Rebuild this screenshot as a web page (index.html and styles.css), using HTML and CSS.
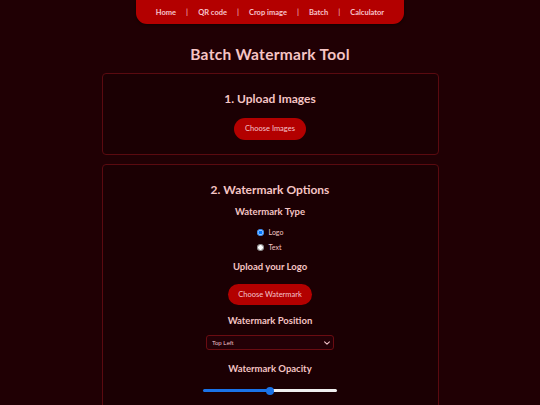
FILE: index.html
```html
<!DOCTYPE html>
<html lang="en">
<head>
<meta charset="utf-8">
<title>Batch Watermark Tool</title>
<link rel="stylesheet" href="styles.css">
</head>
<body>
<nav class="topnav">
  <a class="navlink" href="#">Home</a><span class="sep">|</span>
  <a class="navlink" href="#">QR code</a><span class="sep">|</span>
  <a class="navlink" href="#">Crop image</a><span class="sep">|</span>
  <a class="navlink" href="#">Batch</a><span class="sep">|</span>
  <a class="navlink" href="#">Calculator</a>
</nav>
<h1 class="title">Batch Watermark Tool</h1>
<main class="wrap">
  <section class="card card-upload">
    <h2 class="card-title">1. Upload Images</h2>
    <button class="btn">Choose Images</button>
  </section>
  <section class="card card-options">
    <h2 class="card-title">2. Watermark Options</h2>
    <h3 class="label">Watermark Type</h3>
    <div class="radios">
      <label class="radio"><input type="radio" name="t" checked> Logo</label>
      <label class="radio"><input type="radio" name="t"> Text</label>
    </div>
    <h3 class="label">Upload your Logo</h3>
    <button class="btn btn-wm">Choose Watermark</button>
    <h3 class="label label-pos">Watermark Position</h3>
    <div class="select-wrap">
      <select class="select"><option>Top Left</option></select>
      <svg class="chev" viewBox="0 0 10 6" width="6" height="4"><path d="M1 1 L5 5 L9 1" fill="none" stroke="#f5c4cc" stroke-width="1.8" stroke-linecap="round" stroke-linejoin="round"/></svg>
    </div>
    <h3 class="label label-op">Watermark Opacity</h3>
    <input class="range" type="range" min="0" max="100" value="50">
  </section>
</main>
</body>
</html>
```
FILE: styles.css
```css
html, body {
  margin: 0;
  padding: 0;
  background: #200004;
  font-family: "Lato", "Noto Sans", sans-serif;
  color: #f5c4c4;
}
.topnav {
  width: 268px;
  height: 24px;
  margin: 0 auto;
  background: #b30000;
  border-radius: 0 0 11px 11px;
  display: flex;
  align-items: center;
  justify-content: center;
  gap: 10px;
  box-shadow: 0 1px 3px rgba(0,0,0,0.5);
}
.navlink {
  color: #f7c4cc;
  text-decoration: none;
  font-size: 7.5px;
  font-weight: 700;
}
.sep {
  color: #f7c4cc;
  font-size: 8px;
}
.title {
  text-align: center;
  font-size: 15.5px;
  font-weight: 700;
  margin: 21px 0 10px;
  letter-spacing: 0.3px;
}
.wrap {
  width: 337px;
  margin: 0 auto;
  display: flex;
  flex-direction: column;
  gap: 9px;
}
.card {
  border: 1px solid #5a0a10;
  border-radius: 4px;
  background: #1b0003;
  display: flex;
  flex-direction: column;
  align-items: center;
  padding: 17px 0 15px;
}
.card-upload {
  padding-bottom: 14px;
}
.card-title {
  margin: 0;
  font-size: 12px;
  line-height: 15px;
  font-weight: 700;
}
.card-upload .btn {
  margin-top: 11.5px;
}
.btn {
  background: #b30000;
  color: #f5c4cc;
  border: none;
  border-radius: 12px;
  font-family: inherit;
  font-size: 7.5px;
  height: 22px;
  padding: 0 11px;
}
.btn-wm {
  height: 21px;
  padding: 0 10px;
  margin-top: 11px;
}
.label {
  margin: 9.5px 0 0;
  font-size: 9.5px;
  line-height: 12px;
  font-weight: 700;
}
.label-pos {
  margin-top: 10px;
}
.label-op {
  margin-top: 12.5px;
}
.radios {
  display: flex;
  flex-direction: column;
  align-items: flex-start;
  gap: 6px;
  margin: 9.5px 0 0;
}
.radio {
  font-size: 7px;
  line-height: 9px;
  height: 9px;
  display: flex;
  align-items: center;
  gap: 5px;
}
.radio input {
  width: 7px;
  height: 7px;
  margin: 0;
}
.select-wrap {
  position: relative;
  margin-top: 8px;
  width: 128px;
  height: 15px;
}
.select {
  appearance: none;
  -webkit-appearance: none;
  display: block;
  width: 128px;
  height: 15px;
  font-size: 6px;
  background: #230006;
  color: #f5c4cc;
  border: 1px solid #6a0c12;
  border-radius: 3px;
  padding: 0 5px;
  font-family: "Liberation Sans", sans-serif;
}
.chev {
  position: absolute;
  right: 4px;
  top: 6px;
  pointer-events: none;
}
.range {
  -webkit-appearance: none;
  appearance: none;
  width: 134px;
  height: 8px;
  margin: 12px 0 0;
  background: transparent;
}
.range::-webkit-slider-runnable-track {
  height: 3px;
  border-radius: 2px;
  background: linear-gradient(to right, #1a73e8 0 50%, #efefef 50% 100%);
}
.range::-webkit-slider-thumb {
  -webkit-appearance: none;
  width: 8px;
  height: 8px;
  margin-top: -2.5px;
  border-radius: 50%;
  background: #1a73e8;
  border: none;
}
```
